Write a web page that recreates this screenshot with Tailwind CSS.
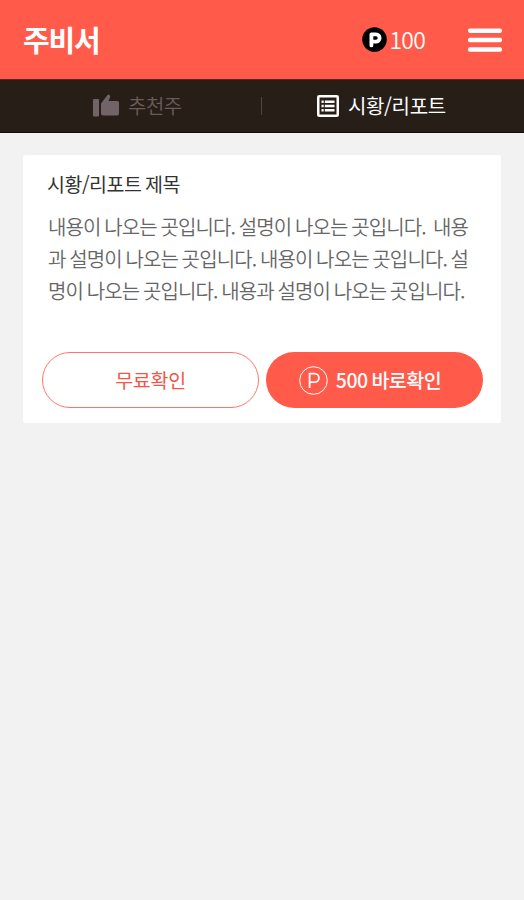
<!DOCTYPE html>
<html lang="ko">
<head>
    <meta charset="UTF-8">
    <meta name="viewport" content="width=device-width, initial-scale=1.0">
    <title>주비서</title>
    <script src="https://cdn.jsdelivr.net/npm/@tailwindcss/browser@4"></script>
</head>
<body class="min-h-screen bg-[#f2f2f2] font-['Noto_Sans_CJK_KR',sans-serif]">
    <!-- Header -->
    <header class="flex h-[79px] items-center bg-[#ff5a4a] pl-[23px] pr-[22px] text-white">
        <h1 class="text-[29px] font-bold leading-none tracking-[-1.2px]">주비서</h1>
        <div class="ml-auto flex items-center gap-[3px]">
            <svg class="size-[25px]" viewBox="0 0 25 25">
                <circle cx="12.5" cy="12.5" r="12.3" fill="#000"/>
                <path d="M9.4 18.4V7.4h4.6a3.6 3.6 0 0 1 0 7.2H9.6" fill="none" stroke="#fff" stroke-width="3.8" stroke-linejoin="round" stroke-linecap="round"/>
            </svg>
            <span class="text-[23px] font-[350] leading-none tracking-[-0.8px]">100</span>
        </div>
        <button class="ml-[43px]" aria-label="메뉴">
            <svg class="h-6 w-[34px]" viewBox="0 0 34 24" fill="#fff">
                <rect y="0.5" width="34" height="4.4" rx="1.8"/>
                <rect y="9.8" width="34" height="4.4" rx="1.8"/>
                <rect y="19.3" width="34" height="4.4" rx="1.8"/>
            </svg>
        </button>
    </header>

    <!-- Tabs -->
    <nav class="flex h-[54px] items-center border-y border-t-[#5c251d] border-b-[#15100c] bg-[#281e18] pb-px text-xl leading-none">
        <a class="flex w-[261px] items-center gap-[9px] pl-[93px] tracking-[-0.5px] text-[#685c5c]">
            <svg class="h-[23px] w-[26px]" viewBox="0 0 26 23" fill="#716368">
                <rect x="0" y="5" width="6" height="17.5" rx="1"/>
                <path d="M8 9.5 14.5 1Q15.5 0 16.7 1.2Q17.4 2 17 3.2L15.6 7H24.5Q26 7 26 8.6V19.5Q26 21.5 24 21.5H10Q8 21.5 8 19.5Z"/>
            </svg>
            <span class="font-[350]">추천주</span>
        </a>
        <div class="h-[18px] w-px bg-[#514640]"></div>
        <a class="flex items-center gap-[9px] pl-[55px] text-white">
            <svg class="size-[22px]" viewBox="0 0 22 22" fill="#fff">
                <rect x="1.25" y="1.25" width="19.5" height="19.5" rx="1" fill="none" stroke="#fff" stroke-width="2.5"/>
                <path d="M4.5 5.5h2.2v2.6H4.5zM7.8 5.5h9.7v2.6H7.8zM4.5 9.7h2.2v2.6H4.5zM7.8 9.7h9.7v2.6H7.8zM4.5 13.9h2.2v2.6H4.5zM7.8 13.9h9.7v2.6H7.8z"/>
            </svg>
            <span class="tracking-[-0.35px]">시황/리포트</span>
        </a>
    </nav>

    <!-- Report card -->
    <main class="mx-[23px] mt-[22px] h-[268px] rounded-[2px] bg-white px-[19px] pt-[14px]">
        <h2 class="pl-[5px] text-[19.5px] leading-[30px] tracking-[-0.5px] text-[#333] [word-spacing:-1.2px]">시황/리포트 제목</h2>
        <p class="mt-3 whitespace-nowrap pl-[6px] text-[20px] font-[350] leading-8 tracking-[-0.87px] text-[#666] [word-spacing:-1.1px]">
            내용이 나오는 곳입니다. 설명이 나오는 곳입니다.&nbsp; 내용<br>
            과 설명이 나오는 곳입니다. 내용이 나오는 곳입니다. 설<br>
            명이 나오는 곳입니다. 내용과 설명이 나오는 곳입니다.
        </p>
        <div class="mt-[45px] flex gap-[7px] text-[19.5px] leading-none tracking-[-0.3px]">
            <button class="h-14 w-[217px] shrink-0 rounded-full border border-[#ff7468] text-[#f55446]">무료확인</button>
            <button class="flex h-14 w-[217px] shrink-0 items-center justify-center gap-2 rounded-full bg-[#ff5a4a] pr-[9px] font-medium text-white">
                <svg class="size-[29px]" viewBox="0 0 29 29" fill="none" stroke="#fff">
                    <circle cx="14.5" cy="14.5" r="13.8" stroke-width="1"/>
                    <path d="M10.6 22V7.6h5a4.3 4.3 0 0 1 0 8.6h-5" stroke-width="1.8"/>
                </svg>
                <span class="pb-px tracking-[-0.5px] [word-spacing:-1.2px]">500 바로확인</span>
            </button>
        </div>
    </main>
</body>
</html>
